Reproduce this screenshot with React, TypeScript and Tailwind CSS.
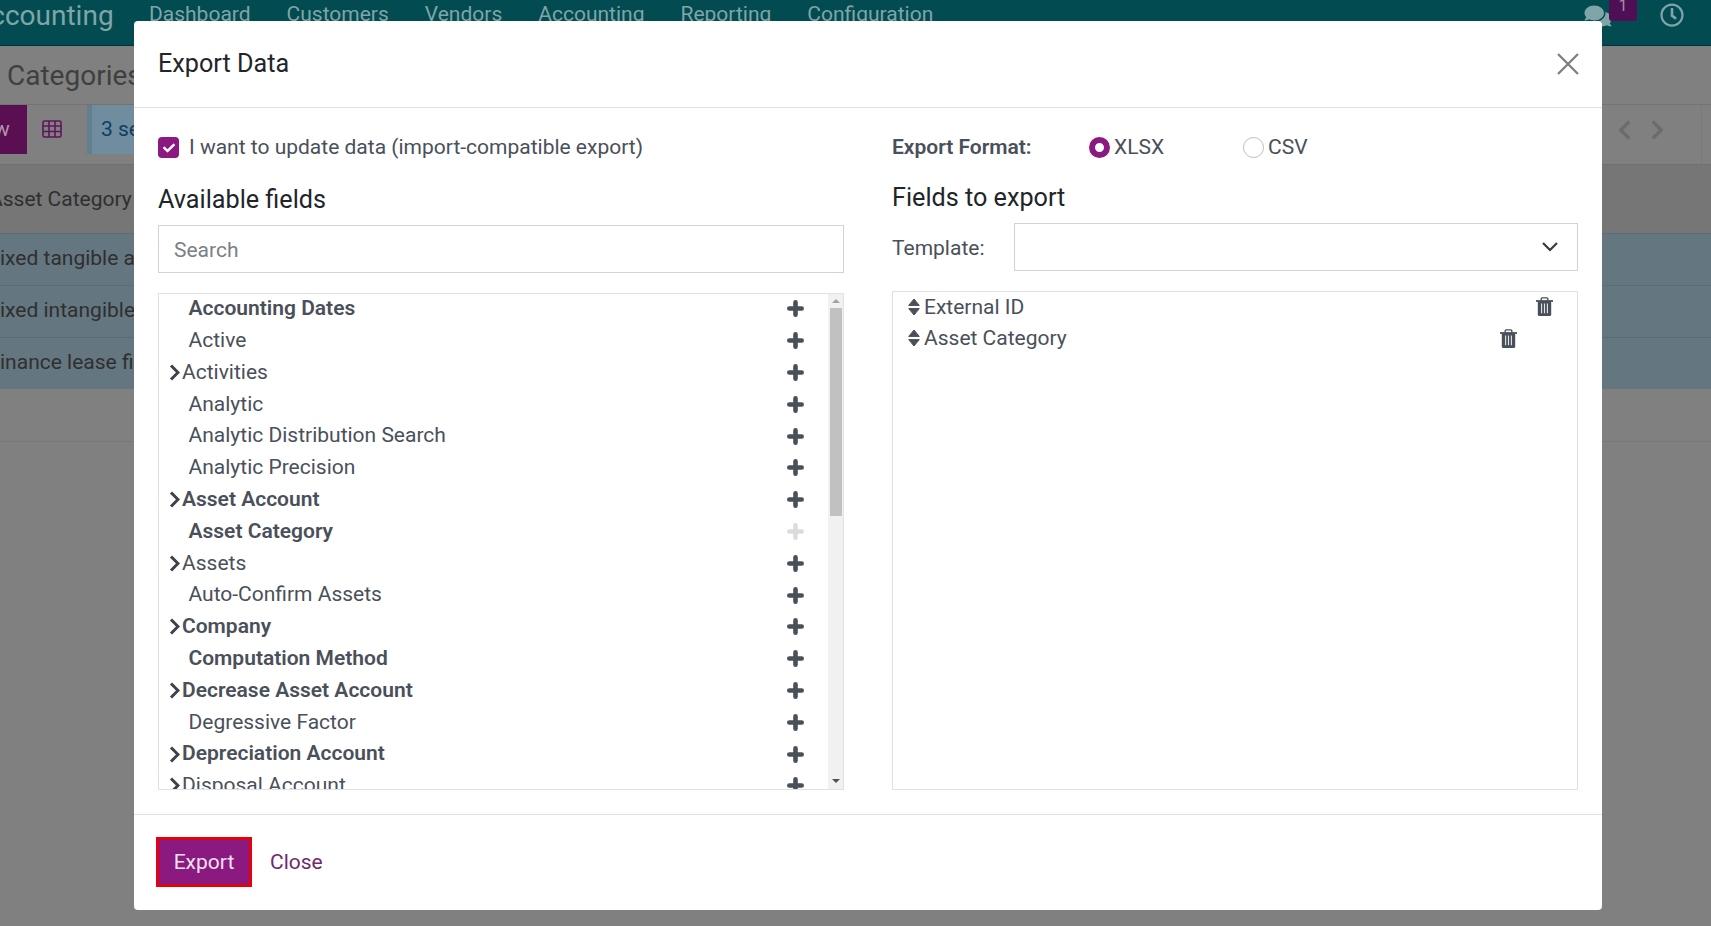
import React from "react";
import { FaChevronRight, FaRegClock, FaComments, FaCheck } from "react-icons/fa";

const font = { fontFamily: "Roboto, sans-serif" };

const Trash = () => (
  <svg viewBox="0 0 17 19" width="17" height="19" className="-mt-[2px]" fill="none">
    <path d="M0 4h17" stroke="#4a505a" strokeWidth="1.8" />
    <path d="M5.2 3.4V1.8c0-.5.4-.9.9-.9h4.8c.5 0 .9.4.9.9v1.6" stroke="#4a505a" strokeWidth="1.4" />
    <rect x="1.8" y="4" width="13.4" height="15" rx="1.6" fill="#4a505a" />
    <path d="M5.6 6.6v9.6M8.5 6.6v9.6M11.4 6.6v9.6" stroke="#e4e6e8" strokeWidth="1.1" />
  </svg>
);

const Plus = ({ off }: { off?: boolean }) => (
  <svg viewBox="0 0 17 17" width="17" height="17" className="shrink-0" fill="none" stroke={off ? "#dadcdf" : "#4a505a"} strokeWidth="4.6" strokeLinecap="round">
    <path d="M8.5 2.3v12.4M2.3 8.5h12.4" />
  </svg>
);

const Sort = () => (
  <svg viewBox="0 0 12 18" width="12" height="18" className="shrink-0 mr-[4px] -mt-[2px]" fill="#4a505a" stroke="#4a505a" strokeWidth="1" strokeLinejoin="round">
    <path d="M6 1L11.3 7.4H.7zM6 17L.7 10.6h10.6z" />
  </svg>
);

const Chevron = () => (
  <svg viewBox="0 0 11 17" width="11" height="17" className="shrink-0 mr-[1px]" fill="none" stroke="#3c424a" strokeWidth="3">
    <path d="M2 1.5L9 8.5 2 15.5" />
  </svg>
);

type Field = { label: string; bold?: boolean; arrow?: boolean; off?: boolean };
const fields: Field[] = [
  { label: "Accounting Dates", bold: true },
  { label: "Active" },
  { label: "Activities", arrow: true },
  { label: "Analytic" },
  { label: "Analytic Distribution Search" },
  { label: "Analytic Precision" },
  { label: "Asset Account", bold: true, arrow: true },
  { label: "Asset Category", bold: true, off: true },
  { label: "Assets", arrow: true },
  { label: "Auto-Confirm Assets" },
  { label: "Company", bold: true, arrow: true },
  { label: "Computation Method", bold: true },
  { label: "Decrease Asset Account", bold: true, arrow: true },
  { label: "Degressive Factor" },
  { label: "Depreciation Account", bold: true, arrow: true },
  { label: "Disposal Account", arrow: true },
];

const nav = ["Dashboard", "Customers", "Vendors", "Accounting", "Reporting", "Configuration"];

const Backdrop = () => (
  <div className="h-[926px] overflow-hidden bg-[#808080] text-[#2f2f2f]">
    <div className="h-[46px] bg-[#014b51] border-b border-[#013338] flex items-start text-[#7fa5a8]">
      <span className="ml-[-28px] w-[177px] shrink-0 text-[28px] leading-[31px]">Accounting</span>
      <div className="flex gap-[36px] text-[21px] leading-[29px]">
        {nav.map((n) => <span key={n}>{n}</span>)}
      </div>
      <div className="ml-auto mr-[27px] flex items-start gap-[23px]">
        <div className="flex items-start">
          <FaComments className="mt-[4px] w-[28px] h-[24px] text-[#7fa5a8] -mr-[3px]" />
          <span className="w-[28px] h-[21px] bg-[#4f0f55] rounded-b-[3px] text-[16px] leading-[12px] text-center text-[#a98aac]">1</span>
        </div>
        <FaRegClock className="mt-[3px] w-[24px] h-[24px]" />
      </div>
    </div>
    <div className="h-[59px] pl-[7px] pt-[9px] text-[28px] leading-[42px] text-[#3f3f3f] border-b border-[#737373]">Categories</div>
    <div className="h-[60px] flex items-start border-b border-[#707070]">
      <div className="w-[27px] h-[49px] bg-[#590f52] text-[#b094ae] text-[21px] leading-[49px] overflow-hidden"><span className="ml-[-6px]">w</span></div>
      <svg viewBox="0 0 20 18" width="20" height="18" className="ml-[15px] mt-[15px]" fill="none" stroke="#60145c" strokeWidth="1.6">
        <rect x="1" y="1" width="18" height="16" rx="1.5" />
        <path d="M1 6h18M1 11.5h18M7 1v16M13 1v16" />
      </svg>
      <div className="ml-[25px] h-[49px] w-[60px] bg-[#6f8d9e] border-l-[5px] border-[#60808f] pl-[9px] text-[21px] leading-[49px] text-[#0f3d5e] whitespace-nowrap">3 se</div>
      <div className="ml-auto flex items-center gap-[18px] h-[49px] text-[#6c6c6c]">
        <FaChevronRight className="w-[15px] h-[22px] rotate-180" />
        <FaChevronRight className="w-[15px] h-[22px]" />
      </div>
      <div className="ml-[36px] mr-[9px] w-[1px] self-stretch bg-[#797979]" />
    </div>
    <div className="h-[68px] bg-[#767676] text-[21px] leading-[68px] overflow-hidden whitespace-nowrap"><span className="ml-[-11px]">Asset Category</span></div>
    {["ixed tangible assets", "ixed intangible", "inance lease fi"].map((t) => (
      <div key={t} className="h-[52px] bg-[#647680] border-t border-[#5b6c75] text-[21px] leading-[48px] whitespace-nowrap">{t}</div>
    ))}
    <div className="h-[53px] border-b border-[#777777]" />
  </div>
);

function App() {
  return (
    <div style={font} className="relative h-[926px] w-[1711px] overflow-hidden">
      <Backdrop />
      <div className="absolute inset-0 pl-[134px] pt-[21px]">
        <div className="w-[1468px] h-[889px] bg-white rounded-[4px] flex flex-col text-[#4a505a] text-[21px]">
          <div className="h-[87px] shrink-0 border-b border-[#dee2e6] flex items-start justify-between pl-[24px] pr-[23px]">
            <span className="text-[25.2px] leading-[32px] mt-[27px] text-[#212529]">Export Data</span>
            <svg viewBox="0 0 22 22" width="22" height="22" className="mt-[32px]" stroke="#7c7c7c" strokeWidth="2.2">
              <path d="M1 1l20 20M21 1L1 21" />
            </svg>
          </div>

          <div className="flex-1 flex pl-[24px] pr-[24px] gap-[48px] min-h-0">
            <div className="w-[686px] flex flex-col">
              <div className="mt-[29px] h-[21px] flex items-center gap-[10px]">
                <span className="w-[21px] h-[21px] bg-[#8a1a80] rounded-[4px] flex items-center justify-center">
                  <FaCheck className="w-[12px] h-[12px] text-white" />
                </span>
                <span>I want to update data (import-compatible export)</span>
              </div>
              <div className="mt-[26px] h-[32px] text-[25.2px] leading-[32px] text-[#212529]">Available fields</div>
              <div className="mt-[9px] h-[48px] border border-[#ced4da] pl-[15px] pt-[4px] flex items-center text-[#7b8087]">Search</div>
              <div className="mt-[20px] h-[497px] border border-[#dee2e6] flex overflow-hidden">
                <div className="flex-1 overflow-hidden -mt-[1px]">
                  {fields.map((f) => (
                    <div key={f.label} className={`h-[31.8px] flex items-center pr-[24px] ${f.arrow ? "pl-[10px]" : "pl-[29.5px]"}`}>
                      {f.arrow && <Chevron />}
                      <span className={`flex-1 ${f.arrow ? "ml-[1px]" : ""} ${f.bold ? "font-semibold" : ""}`}>{f.label}</span>
                      <Plus off={f.off} />
                    </div>
                  ))}
                </div>
                <div className="w-[15px] shrink-0 bg-[#f1f1f1] flex flex-col items-center">
                  <div className="h-[14px] flex items-center">
                    <div className="w-0 h-0 border-x-[4px] border-x-transparent border-b-[4px] border-b-[#a3a3a3]" />
                  </div>
                  <div className="w-[12px] h-[208px] bg-[#c1c1c1]" />
                  <div className="flex-1 flex items-end pb-[6px]">
                    <div className="w-0 h-0 border-x-[4px] border-x-transparent border-t-[4px] border-t-[#505050]" />
                  </div>
                </div>
              </div>
            </div>

            <div className="w-[686px] flex flex-col">
              <div className="mt-[29px] h-[21px] flex items-center">
                <span className="w-[197px] font-semibold">Export Format:</span>
                <span className="w-[21px] h-[21px] rounded-full border-[6px] border-[#8a1a80] bg-white" />
                <span className="ml-[4px] w-[129px]">XLSX</span>
                <span className="w-[21px] h-[21px] rounded-full border border-[#b9bcc0] bg-white" />
                <span className="ml-[4px]">CSV</span>
              </div>
              <div className="mt-[24px] h-[32px] text-[25.2px] leading-[32px] text-[#212529]">Fields to export</div>
              <div className="mt-[9px] h-[48px] flex items-center">
                <span className="w-[122px] mt-[4px]">Template:</span>
                <div className="flex-1 h-[48px] border border-[#ced4da] flex items-center justify-end pr-[19px]">
                  <svg viewBox="0 0 16 10" width="16" height="10" fill="none" stroke="#343a40" strokeWidth="2.2">
                    <path d="M1 1l7 7 7-7" />
                  </svg>
                </div>
              </div>
              <div className="mt-[20px] h-[499px] border border-[#dee2e6] overflow-hidden">
                {[
                  { l: "External ID", pr: "pr-[24px]" },
                  { l: "Asset Category", pr: "pr-[60px]" },
                ].map((r) => (
                  <div key={r.l} className={`h-[31.4px] flex items-center pl-[15px] ${r.pr}`}>
                    <Sort />
                    <span className="flex-1">{r.l}</span>
                    <Trash />
                  </div>
                ))}
              </div>
            </div>
          </div>

          <div className="h-[96px] shrink-0 border-t border-[#dee2e6] flex items-start pl-[22px] pt-[22px]">
            <div className="w-[96px] h-[50px] border-[3px] border-[#e3000f] bg-[#8a1a80] text-[#f1e2ef] flex items-center justify-center pt-[1px]">Export</div>
            <span className="ml-[18px] mt-[10px] text-[#71296b]">Close</span>
          </div>
        </div>
      </div>
    </div>
  );
}

export default App;
